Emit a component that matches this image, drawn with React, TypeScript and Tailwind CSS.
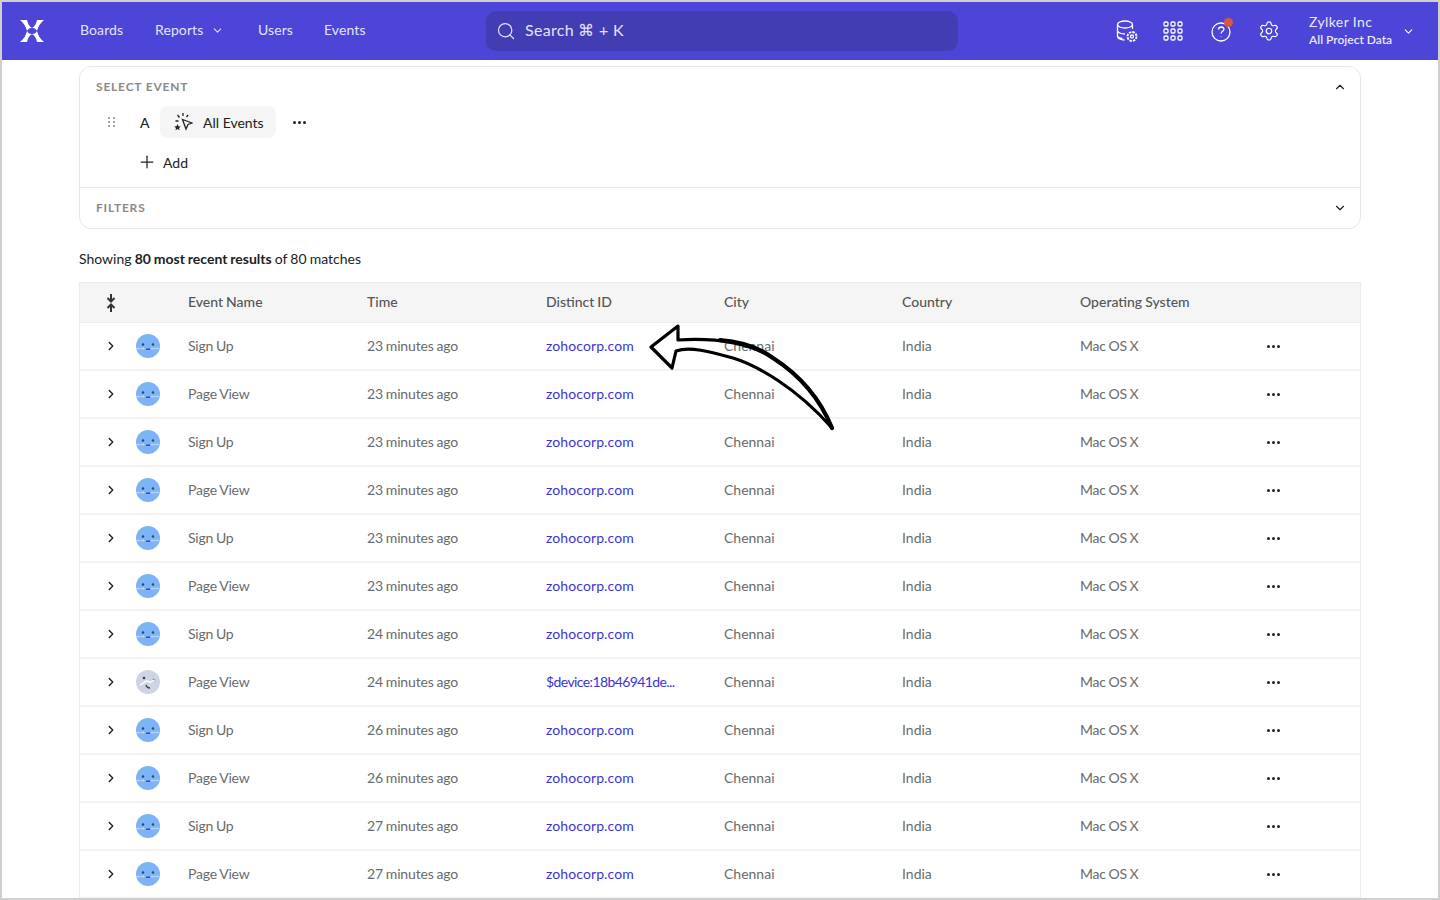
import { ChevronDown, ChevronRight, ChevronUp, Plus, Search, Settings } from "lucide-react"

const rows = [
  ["Sign Up", "23 minutes ago", "zohocorp.com"],
  ["Page View", "23 minutes ago", "zohocorp.com"],
  ["Sign Up", "23 minutes ago", "zohocorp.com"],
  ["Page View", "23 minutes ago", "zohocorp.com"],
  ["Sign Up", "23 minutes ago", "zohocorp.com"],
  ["Page View", "23 minutes ago", "zohocorp.com"],
  ["Sign Up", "24 minutes ago", "zohocorp.com"],
  ["Page View", "24 minutes ago", "$device:18b46941de..."],
  ["Sign Up", "26 minutes ago", "zohocorp.com"],
  ["Page View", "26 minutes ago", "zohocorp.com"],
  ["Sign Up", "27 minutes ago", "zohocorp.com"],
  ["Page View", "27 minutes ago", "zohocorp.com"],
]

function Logo() {
  return (
    <svg width="24" height="24" viewBox="0 0 24 24" fill="#fff">
      <path d="M0 1h7c1 4 2 6 5 8-3 0-4 1-5 3C6 8 4 4 0 1Z" />
      <path d="M24 1h-7c-1 4-2 6-5 8 3 0 4 1 5 3 1-4 3-8 7-11Z" />
      <path d="M0 23h7c1-4 2-6 5-8-3 0-4-1-5-3-1 4-3 8-7 11Z" />
      <path d="M24 23h-7c-1-4-2-6-5-8 3 0 4-1 5-3 1 4 3 8 7 11Z" />
    </svg>
  )
}

function DataIcon() {
  return (
    <svg width="22" height="24" viewBox="0 0 22 24" fill="none" stroke="#fff" strokeWidth="1.3">
      <ellipse cx="9" cy="5.5" rx="7.5" ry="3.5" />
      <path d="M1.5 5.5v12c0 2 3.400 3.500 7 3.500M16.500 5.500v4.500M1.500 11.500c0 2 3.400 3.500 7.500 3.500M1.500 16.500c0 1.500 2 2.500 5 3" />
      <circle cx="16" cy="17.500" r="1.500" />
      <circle cx="16" cy="17.500" r="4.500" strokeDasharray="2.500 1" strokeWidth="1.800" />
    </svg>
  )
}

function GridIcon() {
  return (
    <svg width="20" height="20" viewBox="0 0 20 20" fill="none" stroke="#fff" strokeWidth="1.300">
      {[3, 10, 17].map((y) =>
        [3, 10, 17].map((x) => <rect key={`${x}-${y}`} x={x - 2} y={y - 2} width="4" height="4" rx="1.200" />),
      )}
    </svg>
  )
}

function HelpIcon() {
  return (
    <div className="relative h-[24px] w-[22px]">
      <svg width="24" height="24" viewBox="0 0 24 24" fill="none" stroke="#fff" strokeWidth="1.300">
        <circle cx="11" cy="13" r="9" />
        <path d="M8.500 10.500c0-1.500 1-2.500 2.700-2.500s2.700 1 2.700 2.300c0 2-2.700 2-2.700 4.200" />
        <path d="M11.200 17v.6" />
      </svg>
      <span className="absolute right-[-1px] top-[-1px] h-[9px] w-[9px] rounded-full bg-[#d9583b]" />
    </div>
  )
}

function EventsIcon() {
  return (
    <svg width="20" height="20" viewBox="0 0 20 20" fill="none" stroke="#222" strokeWidth="1.300">
      <path d="M9.500 7.500 19 11l-4 1.500-2 4.500-3.500-9.500Z" />
      <path d="M10 1v3M4.500 3 6.500 5.500M15 3l-1.500 2M2.500 9h3" />
      <path d="m4.500 12 1 2.200 2.300.2-1.800 1.500.6 2.300-2.100-1.200-2 1.200.5-2.300L1.200 14.400l2.300-.2Z" fill="#222" stroke="none" />
    </svg>
  )
}

function Grip() {
  return (
    <svg width="8" height="12" viewBox="0 0 8 12" fill="#a3a3a3">
      {[1, 5, 9].map((y) => [0, 5].map((x) => <rect key={`${x}-${y}`} x={x} y={y} width="2" height="2" />))}
    </svg>
  )
}

function Dots() {
  return (
    <svg width="13" height="3" viewBox="0 0 13 3" fill="#222">
      <circle cx="1.500" cy="1.500" r="1.500" />
      <circle cx="6.500" cy="1.500" r="1.500" />
      <circle cx="11.500" cy="1.500" r="1.500" />
    </svg>
  )
}

function CollapseIcon() {
  return (
    <svg width="12" height="20" viewBox="0 0 12 20" fill="none" stroke="#333" strokeWidth="2">
      <path d="M6 1v7M2.500 5 6 8.500 9.500 5M6 19v-7M2.500 15 6 11.500 9.500 15" />
    </svg>
  )
}

function Avatar({ grey }: { grey: boolean }) {
  if (grey) {
    return (
      <svg width="24" height="24" viewBox="0 0 24 24">
        <circle cx="12" cy="12" r="12" fill="#cfd3e6" />
        <circle cx="8" cy="8" r="1.300" fill="#3b3f55" />
        <circle cx="18" cy="10" r="1.300" fill="#3b3f55" />
        <path d="M4 15c3-1 4-4 7-4 2 0 2 2 4 1s2-2 4-2" stroke="#fff" strokeWidth="1.300" fill="none" />
        <path d="M10 15c.5 2 2 3 4 3" stroke="#3b3f55" strokeWidth="1.300" fill="none" />
      </svg>
    )
  }
  return (
    <svg width="24" height="24" viewBox="0 0 24 24">
      <circle cx="12" cy="12" r="12" fill="#7db4f7" />
      <circle cx="7" cy="10.500" r="1.200" fill="#2f4a72" />
      <circle cx="17" cy="10.500" r="1.200" fill="#2f4a72" />
      <path d="M10 15.200h4" stroke="#2f4a72" strokeWidth="1.300" />
      <path d="M1 14.500h8M15 14.500h8" stroke="#c4dcfb" strokeWidth="1.500" strokeDasharray="2 .6" />
    </svg>
  )
}

// hand drawn arrow over the table
function Arrow() {
  return (
    <svg
      className="pointer-events-none absolute left-[644px] top-[319px]"
      width="190"
      height="112"
      viewBox="0 0 190 112"
      fill="none"
      stroke="#000"
      strokeLinejoin="round"
      strokeLinecap="round"
    >
      <path
        d="M32 5 5 26l21 21 4-17c14-5 35 1 57 7 23 7 63 29 99 70-11-27-31-52-59-70C100 20 65 17 32 19Z"
        strokeWidth="3.200"
      />
      <path d="M74 19c25 2 40 8 53 18 28 18 48 43 59 70" strokeWidth="4.200" />
    </svg>
  )
}

export default function App() {
  return (
    <div className="relative h-[900px] overflow-hidden border-2 border-[#cfcfcf] bg-white font-[Lato,sans-serif] text-[14px] text-[#222]">
      <header className="flex h-[58px] items-center bg-[#4c45d7] text-white">
        <div className="ml-[18px] mr-[36px]">
          <Logo />
        </div>
        <nav className="flex items-center pb-[3px] text-[14px] tracking-[0.1px] text-[#e4e2fa]">
          <a className="w-[75px]">Boards</a>
          <a className="flex w-[103px] items-center">
            Reports <ChevronDown size={13} strokeWidth={2} className="ml-[8px] mt-[1px]" />
          </a>
          <a className="w-[66px]">Users</a>
          <a className="w-[162px]">Events</a>
        </nav>
        <div className="flex h-[40px] w-[472px] items-center gap-[9px] rounded-[10px] bg-[#433db4] px-[10px] text-[16px] tracking-[0.3px] text-[#e4e2fa]">
          <Search size={20} strokeWidth={1.500} />
          <span className="pb-[2px]">Search ⌘ + K</span>
        </div>
        <div className="ml-[158px] flex items-center gap-[26px]">
          <div className="w-[20px]">
            <DataIcon />
          </div>
          <div className="flex w-[22px] justify-center">
            <GridIcon />
          </div>
          <HelpIcon />
          <Settings size={22} strokeWidth={1.300} />
        </div>
        <div className="ml-[29px] flex w-[88px] flex-col gap-[2px] pb-[2px] text-[#e9e7fb]">
          <span className="text-[14px] leading-[18px] tracking-[0.4px]">Zylker Inc</span>
          <span className="whitespace-nowrap text-[12px] font-semibold leading-[14px]">All Project Data</span>
        </div>
        <ChevronDown size={13} strokeWidth={2} className="ml-[5px]" />
      </header>

      <main className="px-[77px] pt-[6px]">
        <section className="rounded-[12px] border border-[#e8e8e8]">
          <div className="relative h-[120px] pl-[16px] pt-[12px]">
            <h3 className="text-[12px] font-bold leading-[16px] tracking-[0.8px] text-[#8a8a8a]">SELECT EVENT</h3>
            <ChevronUp size={14} strokeWidth={2} className="absolute right-[13px] top-[13px]" />
            <div className="mt-[11px] flex h-[32px] items-center">
              <span className="ml-[12px] w-[32px]">
                <Grip />
              </span>
              <span className="w-[20px] font-medium">A</span>
              <div className="flex h-[32px] w-[116px] items-center gap-[10px] rounded-[8px] bg-[#f5f5f5] pl-[13px]">
                <EventsIcon />
                <span>All Events</span>
              </div>
              <span className="ml-[17px]">
                <Dots />
              </span>
            </div>
            <div className="ml-[41px] mt-[8px] flex h-[32px] items-center gap-[6px]">
              <Plus size={20} strokeWidth={1.500} />
              <span>Add</span>
            </div>
          </div>
          <div className="relative flex h-[41px] items-center border-t border-[#e8e8e8] pl-[16px]">
            <h3 className="text-[12px] font-bold tracking-[0.8px] text-[#8a8a8a]">FILTERS</h3>
            <ChevronDown size={14} strokeWidth={2} className="absolute right-[13px] top-[13px]" />
          </div>
        </section>

        <p className="mt-[21px] h-[32px] leading-[18px] [word-spacing:-0.5px]">
          Showing <b className="font-bold">80 most recent results</b> of 80 matches
        </p>

        <section className="border-x border-[#ececec]">
          <div className="grid h-[41px] grid-cols-[108px_179px_179px_178px_178px_178px_1fr] items-center border-y border-[#ececec] bg-[#f5f5f5] pb-[2px] font-medium text-[#555] [word-spacing:-0.5px]">
            <div className="pl-[25px] pt-[2px]">
              <CollapseIcon />
            </div>
            <div>Event Name</div>
            <div>Time</div>
            <div>Distinct ID</div>
            <div>City</div>
            <div>Country</div>
            <div>Operating System</div>
          </div>
          {rows.map(([name, time, id], i) => (
            <div
              key={i}
              className="grid h-[48px] grid-cols-[108px_179px_179px_178px_178px_178px_1fr] items-center border-b-2 border-[#f2f2f2] text-[#6b6b6b]"
            >
              <div className="flex items-center">
                <ChevronRight size={14} strokeWidth={2.400} className="ml-[24px] text-[#222]" />
                <span className="ml-[18px]">
                  <Avatar grey={id.startsWith("$")} />
                </span>
              </div>
              <div className="pb-[2px] tracking-[-0.2px] [word-spacing:-0.6px]">{name}</div>
              <div className="pb-[2px] tracking-[-0.15px] [word-spacing:-0.6px]">{time}</div>
              {id.startsWith("$") ? (
                <div className="pb-[2px] tracking-[-0.6px] text-[#3b34d9]">{id}</div>
              ) : (
                <div className="pb-[2px] tracking-[0.1px] text-[#3b34d9]">{id}</div>
              )}
              <div className="pb-[2px]">Chennai</div>
              <div className="pb-[2px]">India</div>
              <div className="flex items-center">
                <span className="w-[187px] pb-[2px] tracking-[-0.2px] [word-spacing:-0.8px]">Mac OS X</span>
                <Dots />
              </div>
            </div>
          ))}
        </section>
      </main>
      <Arrow />
    </div>
  )
}
